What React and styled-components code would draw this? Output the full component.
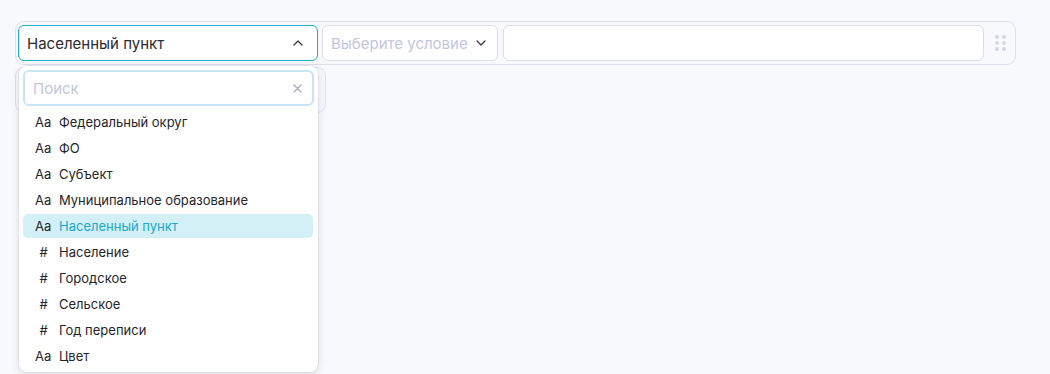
import React from "react";
import styled, { createGlobalStyle } from "styled-components";

const Global = createGlobalStyle`
  html, body { margin: 0; padding: 0; background: #f8f9fd; }
  body { font-family: Inter, "Noto Sans", sans-serif; color: #23232b; }
  * { box-sizing: border-box; }
`;

const Page = styled.div`
  min-height: 374px;
  padding: 21px 34px 0 15px;
  display: flex;
  flex-direction: column;
  gap: 2px;
  align-items: flex-start;
`;

const RowCard = styled.div`
  width: ${(p) => p.$w}px;
  height: ${(p) => p.$h}px;
  border: 1px solid #dfe0ec;
  border-radius: 9px;
  background: #f8f9fd;
  display: flex;
  align-items: center;
  padding: 0 10px 0 2px;
  gap: 4px;
  position: relative;
`;

const SelectWrap = styled.div`
  position: relative;
  flex: 0 0 auto;
`;

const Select = styled.div`
  width: ${(p) => p.$w}px;
  height: 36px;
  border: 1px solid ${(p) => (p.$open ? "#19aed2" : "#dcdde9")};
  border-radius: 6px;
  background: #fff;
  display: flex;
  align-items: center;
  justify-content: space-between;
  padding: 0 ${(p) => p.$pr}px 0 8px;
  font-size: 15px;
  color: ${(p) => (p.$placeholder ? "#c3c6de" : "#2a2a32")};
  white-space: nowrap;
`;

const TextInput = styled.div`
  flex: 0 0 481px;
  height: 36px;
  margin-left: 1px;
  border: 1px solid #dcdde9;
  border-radius: 6px;
  background: #fff;
`;

const Handle = styled.div`
  display: grid;
  grid-template-columns: repeat(2, 4px);
  grid-auto-rows: 4px;
  gap: 2px 3px;
  margin-left: 7px;
  span {
    width: 4px;
    height: 4px;
    border-radius: 50%;
    background: #d5d6e4;
  }
`;

const Dropdown = styled.div`
  position: absolute;
  top: 41px;
  left: 1px;
  width: 299px;
  background: #fff;
  border-radius: 8px;
  box-shadow: 0 2px 8px rgba(40, 45, 80, 0.14), 0 0 0 1px rgba(40, 45, 80, 0.05);
  padding: 4px;
  z-index: 10;
`;

const Search = styled.div`
  height: 36px;
  border: 2px solid #c6e6f6;
  border-radius: 6px;
  display: flex;
  align-items: center;
  justify-content: space-between;
  padding: 0 10px 0 8px;
  font-size: 15px;
  color: #c3c6de;
  margin-bottom: 4px;
`;

const List = styled.div`
  display: flex;
  flex-direction: column;
  gap: 2px;
`;

const Item = styled.div`
  height: 24px;
  margin-right: 1px;
  border-radius: 5px;
  display: flex;
  align-items: center;
  padding-left: 12px;
  font-size: 13px;
  background: ${(p) => (p.$active ? "#d3f0f6" : "transparent")};
  color: ${(p) => (p.$active ? "#17a9d2" : "#25252d")};
`;

const TypeIcon = styled.span`
  width: 24px;
  flex: 0 0 24px;
  font-size: 13px;
  color: #25252d;
  text-align: ${(p) => (p.$hash ? "center" : "left")};
  padding-right: ${(p) => (p.$hash ? "7px" : "0")};
`;

const Chevron = ({ up }) => (
  <svg width="10" height="6" viewBox="0 0 10 6" fill="none" style={{ flex: "0 0 auto", marginLeft: 8 }}>
    <path
      d={up ? "M1 5L5 1L9 5" : "M1 1L5 5L9 1"}
      stroke="#3a3a44"
      strokeWidth="1.3"
      strokeLinecap="round"
      strokeLinejoin="round"
    />
  </svg>
);

const Close = () => (
  <svg width="9" height="9" viewBox="0 0 9 9">
    <path d="M1 1L8 8M8 1L1 8" stroke="#a8abc0" strokeWidth="1.3" strokeLinecap="round" />
  </svg>
);

const items = [
  ["Aa", "Федеральный округ"],
  ["Aa", "ФО"],
  ["Aa", "Субъект"],
  ["Aa", "Муниципальное образование"],
  ["Aa", "Населенный пункт", true],
  ["#", "Население"],
  ["#", "Городское"],
  ["#", "Сельское"],
  ["#", "Год переписи"],
  ["Aa", "Цвет"],
];

export default function App() {
  return (
    <>
      <Global />
      <Page>
        <RowCard $w={1001} $h={44}>
          <SelectWrap>
            <Select $w={300} $pr={14} $open>
              <span>Населенный пункт</span>
              <Chevron up />
            </Select>
            <Dropdown>
              <Search>
                <span>Поиск</span>
                <Close />
              </Search>
              <List>
                {items.map(([t, label, active]) => (
                  <Item key={label} $active={active}>
                    <TypeIcon $hash={t === "#"}>{t}</TypeIcon>
                    <span>{label}</span>
                  </Item>
                ))}
              </List>
            </Dropdown>
          </SelectWrap>
          <Select $w={176} $pr={12} $placeholder>
            <span>Выберите условие</span>
            <Chevron />
          </Select>
          <TextInput />
          <Handle>
            {Array.from({ length: 6 }).map((_, i) => (
              <span key={i} />
            ))}
          </Handle>
        </RowCard>
        <RowCard $w={311} $h={46} />
      </Page>
    </>
  );
}
